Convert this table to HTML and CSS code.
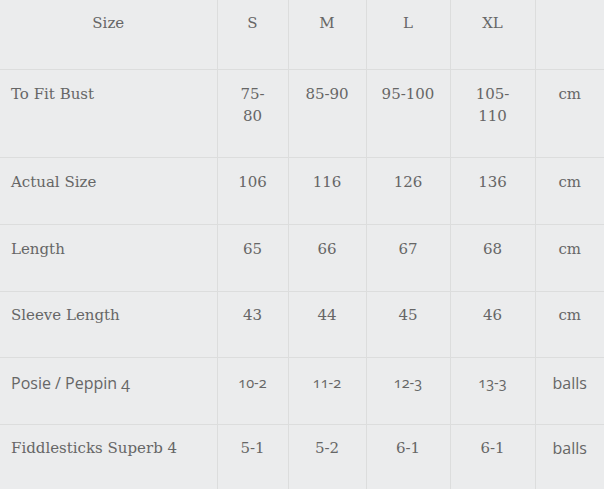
FILE: index.html
```html
<!DOCTYPE html>
<html>
<head>
<meta charset="utf-8">
<link rel="stylesheet" href="styles.css">
</head>
<body>
<table class="sizes">
  <colgroup>
    <col class="c-label"><col class="c-s"><col class="c-m"><col class="c-l"><col class="c-xl"><col class="c-unit">
  </colgroup>
  <tr class="head">
    <td class="center">Size</td><td>S</td><td>M</td><td>L</td><td>XL</td><td></td>
  </tr>
  <tr class="tall">
    <td class="label">To Fit Bust</td><td>75-<br>80</td><td>85-90</td><td>95-100</td><td>105-<br>110</td><td>cm</td>
  </tr>
  <tr>
    <td class="label">Actual Size</td><td>106</td><td>116</td><td>126</td><td>136</td><td>cm</td>
  </tr>
  <tr>
    <td class="label">Length</td><td>65</td><td>66</td><td>67</td><td>68</td><td>cm</td>
  </tr>
  <tr class="short">
    <td class="label">Sleeve Length</td><td>43</td><td>44</td><td>45</td><td>46</td><td>cm</td>
  </tr>
  <tr class="sans">
    <td class="label">Posie / Peppin 4</td><td class="num">10-2</td><td class="num">11-2</td><td class="num">12-3</td><td class="num">13-3</td><td>balls</td>
  </tr>
  <tr class="last">
    <td class="label">Fiddlesticks Superb 4</td><td>5-1</td><td>5-2</td><td>6-1</td><td>6-1</td><td class="sansu">balls</td>
  </tr>
</table>
</body>
</html>
```
FILE: styles.css
```css
html, body {
  margin: 0;
  padding: 0;
  background: #ebeced;
}
.sizes {
  border-collapse: collapse;
  table-layout: fixed;
  width: 604px;
  font-family: "DejaVu Serif", serif;
  font-size: 15px;
  color: #666666;
}
.c-label { width: 217px; }
.c-s { width: 71px; }
.c-m { width: 78px; }
.c-l { width: 84px; }
.c-xl { width: 85px; }
.c-unit { width: 69px; }
.sizes td {
  text-align: center;
  vertical-align: top;
  line-height: 22px;
  padding: 13px 4px 0;
  height: 67px;
  box-sizing: border-box;
  border-left: 1px solid #dcdddd;
  border-bottom: 1px solid #dcdddd;
}
.sizes td:first-child { border-left: none; }
.sizes td.label { text-align: left; padding-left: 11px; }
.sizes tr.head td { height: 69px; padding-top: 12px; }
.sizes tr.tall td { height: 88px; }
.sizes tr.short td { height: 66px; padding-top: 12px; }
.sizes tr.sans td {
  height: 67px;
  padding-top: 14px;
  font-family: "Open Sans", sans-serif;
  font-size: 16px;
  font-variant-numeric: oldstyle-nums;
}
.sizes tr.sans td.num { font-size: 14.5px; }
.sizes tr.last td { height: 65px; border-bottom: none; padding-top: 12px; }
.sizes td.sansu { font-family: "Open Sans", sans-serif; font-size: 16px; }
```
